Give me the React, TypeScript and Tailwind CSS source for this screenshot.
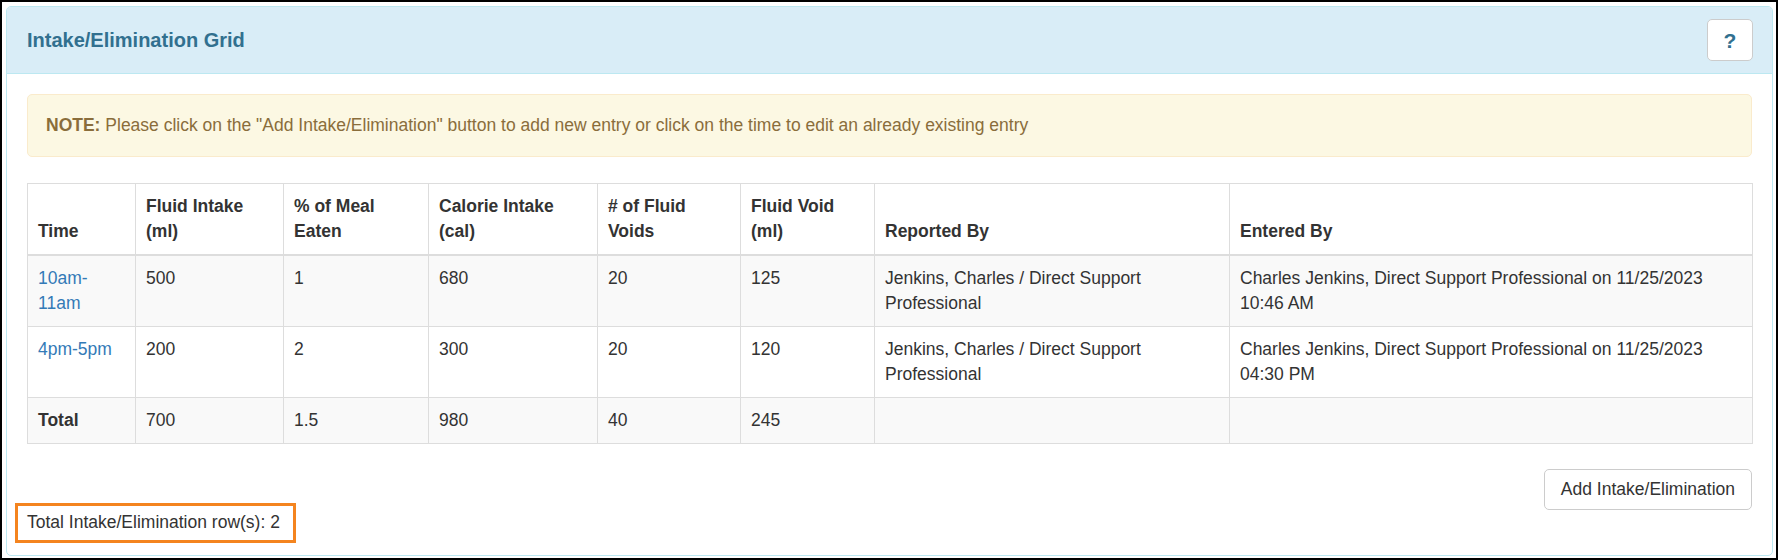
const rows = [
  {
    time: '10am-11am',
    fluidIntake: '500',
    mealEaten: '1',
    calories: '680',
    voids: '20',
    fluidVoid: '125',
    reportedBy: 'Jenkins, Charles / Direct Support Professional',
    enteredBy: 'Charles Jenkins, Direct Support Professional on 11/25/2023 10:46 AM',
  },
  {
    time: '4pm-5pm',
    fluidIntake: '200',
    mealEaten: '2',
    calories: '300',
    voids: '20',
    fluidVoid: '120',
    reportedBy: 'Jenkins, Charles / Direct Support Professional',
    enteredBy: 'Charles Jenkins, Direct Support Professional on 11/25/2023 04:30 PM',
  },
];

const headers = [
  'Time',
  'Fluid Intake (ml)',
  '% of Meal Eaten',
  'Calorie Intake (cal)',
  '# of Fluid Voids',
  'Fluid Void (ml)',
  'Reported By',
  'Entered By',
];

const colWidths = ['w-[108px]', 'w-[148px]', 'w-[145px]', 'w-[169px]', 'w-[143px]', 'w-[134px]', 'w-[355px]', 'w-[523px]'];

const cell = 'border border-[#dddddd] px-[10px] py-[10px] align-top';

export default function App() {
  return (
    <div
      className="h-[560px] w-[1778px] border-2 border-black bg-white pb-[2px] pl-[4px] pr-[3px] pt-[4px] text-[17.5px] leading-[25px] text-[#333333]"
      style={{ fontFamily: '"Liberation Sans", Arial, sans-serif' }}
    >
      <section className="flex h-full flex-col rounded-[5px] border border-[#bce8f1] bg-white">
        <header className="flex items-center justify-between rounded-t-[4px] border-b border-[#bce8f1] bg-[#d9edf7] py-[12px] pl-[20px] pr-[19px]">
          <h3 className="text-[20px] font-bold leading-[22px] text-[#31708f]">Intake/Elimination Grid</h3>
          <button
            type="button"
            className="grid h-[42px] w-[46px] place-items-center rounded-[5px] border border-[#cccccc] bg-white text-[21px] font-bold text-[#31708f]"
            aria-label="Help"
          >
            ?
          </button>
        </header>

        <div className="flex flex-col px-[20px] pb-[19px] pt-[20px]">
          <div className="mb-[26px] rounded-[5px] border border-[#faebcc] bg-[#fcf8e3] px-[18px] py-[18px] text-[#8a6d3b]">
            <strong>NOTE:</strong> Please click on the "Add Intake/Elimination" button to add new entry or click on the
            time to edit an already existing entry
          </div>

          <table className="mb-[25px] w-full table-fixed border-collapse">
            <colgroup>
              {colWidths.map((w, i) => (
                <col key={i} className={w} />
              ))}
            </colgroup>
            <thead>
              <tr>
                {headers.map((h) => (
                  <th
                    key={h}
                    className="border border-b-2 border-[#dddddd] px-[10px] py-[10px] text-left align-bottom font-bold"
                  >
                    {h}
                  </th>
                ))}
              </tr>
            </thead>
            <tbody>
              {rows.map((row, i) => (
                <tr key={row.time} className={i % 2 === 0 ? 'bg-[#f9f9f9]' : 'bg-white'}>
                  <td className={cell}>
                    <a href="#" className="text-[#337ab7]">
                      {row.time}
                    </a>
                  </td>
                  <td className={cell}>{row.fluidIntake}</td>
                  <td className={cell}>{row.mealEaten}</td>
                  <td className={cell}>{row.calories}</td>
                  <td className={cell}>{row.voids}</td>
                  <td className={cell}>{row.fluidVoid}</td>
                  <td className={cell}>{row.reportedBy}</td>
                  <td className={cell}>{row.enteredBy}</td>
                </tr>
              ))}
              <tr className="bg-[#f9f9f9]">
                <td className={`${cell} font-bold`}>Total</td>
                <td className={cell}>700</td>
                <td className={cell}>1.5</td>
                <td className={cell}>980</td>
                <td className={cell}>40</td>
                <td className={cell}>245</td>
                <td className={cell}></td>
                <td className={cell}></td>
              </tr>
            </tbody>
          </table>

          <div className="flex justify-end">
            <button
              type="button"
              className="h-[41px] rounded-[5px] border border-[#cccccc] bg-white px-[16px] text-[17.5px] text-[#333333]"
            >
              Add Intake/Elimination
            </button>
          </div>

          <div className="relative self-start">
            Total Intake/Elimination row(s): 2
            <span className="pointer-events-none absolute -bottom-[8px] -left-[12px] -right-[16px] -top-[7px] border-[3px] border-[#f4841f]" />
          </div>
        </div>
      </section>
    </div>
  );
}
